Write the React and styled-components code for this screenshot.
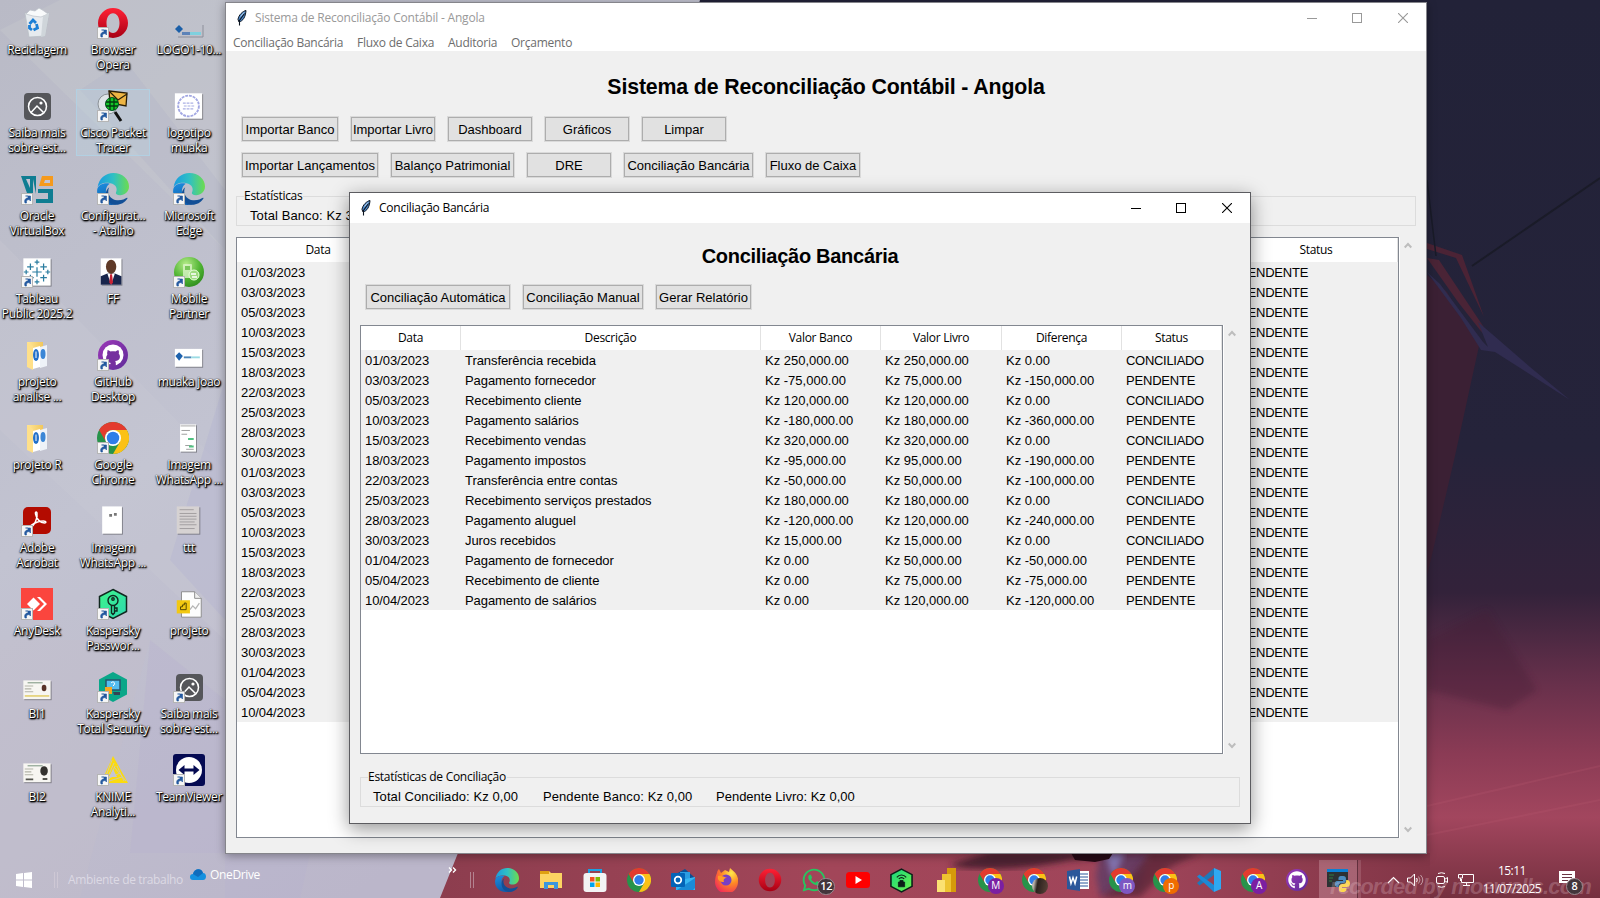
import React from "react";
import styled, { createGlobalStyle, css } from "styled-components";
import { FaGithub, FaWhatsapp } from "react-icons/fa";

const ui = `"Open Sans", "Noto Sans", sans-serif`;
const arial = `"Liberation Sans", Arial, sans-serif`;

const GlobalStyle = createGlobalStyle`
  * { box-sizing: border-box; }
  body { margin: 0; overflow: hidden; font-family: ${ui}; font-size: 12px; }
`;

/* ---------- desktop ---------- */
const Desktop = styled.main`
  position: relative;
  display: flex;
  flex-direction: column;
  width: 1600px;
  height: 898px;
  overflow: hidden;
  background: #24243a;
`;
const WallpaperSvg = styled.svg`
  position: absolute;
  inset: 0;
`;
const IconArea = styled.section`
  position: relative;
  flex: 1;
  display: flex;
  padding-top: 6px;
  margin-left: -1px;
`;
const IconColumn = styled.div`
  display: flex;
  flex-direction: column;
  width: 76px;
`;
const Shortcut = styled.div`
  height: 83px;
  display: flex;
  flex-direction: column;
  align-items: center;
  ${(p) => p.$selected && css`
    height: 67px;
    margin: 0 1px 16px;
    background: rgba(190, 220, 235, 0.28);
    box-shadow: inset 0 0 0 1px rgba(175, 210, 230, 0.8);
  `}
`;
const IconBox = styled.div`
  position: relative;
  width: 32px;
  height: 34px;
  display: flex;
  align-items: center;
  justify-content: center;
`;
const ShortcutArrow = styled.svg`
  position: absolute;
  left: 0;
  bottom: 1px;
`;
const Label = styled.div`
  margin-top: 2px;
  color: #fff;
  line-height: 15px;
  letter-spacing: ${(p) => p.$ls ?? -0.3}px;
  text-align: center;
  white-space: pre;
  text-shadow: 1px 1px 1px #000, 0 1px 2px #000, 1px 1px 2px #000, 0 0 1px rgba(0, 0, 0, 0.9);
`;

/* ---------- windows ---------- */
const Window = styled.section`
  position: absolute;
  left: ${(p) => p.$x}px;
  top: ${(p) => p.$y}px;
  width: ${(p) => p.$w}px;
  height: ${(p) => p.$h}px;
  display: flex;
  flex-direction: column;
  border: 1px solid ${(p) => (p.$active ? "#5c5c60" : "#85858b")};
  background: #f0f0f0;
  box-shadow: ${(p) => (p.$active ? "0 5px 18px rgba(0,0,0,.42)" : "0 2px 9px rgba(0,0,0,.35)")};
`;
const TitleBar = styled.header`
  display: flex;
  align-items: center;
  height: ${(p) => p.$h}px;
  padding-left: 10px;
  background: #fff;
  color: ${(p) => (p.$active ? "#000" : "#999")};
`;
const TitleText = styled.span`
  flex: 1;
  margin-left: 7px;
  line-height: 16px;
  letter-spacing: ${(p) => p.$ls}px;
  white-space: nowrap;
`;
const WinButton = styled.span`
  width: ${(p) => p.$w}px;
  padding-right: ${(p) => (p.$w === 45 ? 1 : 0)}px;
  display: flex;
  justify-content: center;
`;
const MenuBar = styled.nav`
  display: flex;
  gap: 14px;
  height: 19px;
  padding-left: 7px;
  background: #fff;
  color: #6d6d6d;
  line-height: 21px;
`;
const MenuItem = styled.span`
  width: ${(p) => p.$w}px;
  letter-spacing: -0.25px;
  white-space: nowrap;
`;
const Body = styled.div`
  flex: 1;
  display: flex;
  flex-direction: column;
  padding: 20px 10px 0;
  font-family: ${arial};
  font-size: 13px;
  color: #000;
`;
const Heading = styled.h1`
  margin: 0;
  height: ${(p) => p.$h}px;
  line-height: ${(p) => p.$lh}px;
  font-size: ${(p) => p.$size}px;
  font-weight: 700;
  text-align: center;
  letter-spacing: ${(p) => p.$ls}px;
`;
const ButtonRow = styled.div`
  display: flex;
  gap: 11px;
  padding-left: 5px;
  margin-top: ${(p) => p.$mt}px;
`;
const Button = styled.button`
  width: ${(p) => p.$w}px;
  height: 26px;
  padding: 1px 0 0;
  border: 1px solid #dadada;
  background: #e1e1e1;
  box-shadow: inset 0 0 0 1px #adadad;
  font: 13px/23px ${arial};
  letter-spacing: ${(p) => p.$ls ?? 0}px;
  white-space: nowrap;
  color: #000;
`;
const Frame = styled.div`
  position: relative;
  display: flex;
  height: 30px;
  margin-top: ${(p) => p.$mt}px;
  padding: 11px 0 0 ${(p) => p.$pl}px;
  border: 1px solid #dcdcdc;
  line-height: 16px;
  white-space: nowrap;
`;
const Legend = styled.span`
  position: absolute;
  left: 7px;
  top: -10px;
  padding-right: 1px;
  background: #f0f0f0;
  font: 12px/17px ${ui};
  letter-spacing: -0.28px;
`;
const Stat = styled.span`
  width: ${(p) => p.$w}px;
  letter-spacing: ${(p) => p.$ls ?? 0}px;
`;
const TreeArea = styled.div`
  display: flex;
  margin-top: ${(p) => p.$mt}px;
  height: ${(p) => p.$h}px;
`;
const Tree = styled.div`
  width: ${(p) => p.$w}px;
  border: 1px solid #828790;
  background: #fff;
  box-shadow: 1px 0 #fff;
`;
const TreeHead = styled.div`
  display: grid;
  grid-template-columns: ${(p) => p.$cols};
  height: 24px;
  font: 12px/23px ${ui};
  text-align: center;
`;
const HeadCell = styled.span`
  letter-spacing: -0.3px;
  border-right: 1px solid ${(p) => (p.$blank ? "#fff" : "#e2e2e2")};
`;
const TreeRow = styled.div`
  display: grid;
  grid-template-columns: ${(p) => p.$cols};
  height: 20px;
  line-height: 22px;
  background: #f0f0f0;
`;
const Cell = styled.span`
  padding-left: 4px;
  white-space: pre;
  letter-spacing: ${(p) => p.$ls ?? 0}px;
`;
const ScrollBar = styled.div`
  width: 17px;
  display: flex;
  flex-direction: column;
  align-items: center;
  justify-content: space-between;
  padding: 5px 0;
`;

/* ---------- taskbar ---------- */
const Taskbar = styled.footer`
  position: relative;
  display: flex;
  align-items: center;
  height: 38px;
  color: #fff;
`;
const StartButton = styled.div`
  width: 48px;
  padding-top: 2px;
  display: flex;
  justify-content: center;
`;
const Grip = styled.div`
  width: 4px;
  height: 16px;
  margin-top: 2px;
  margin-left: ${(p) => p.$ml}px;
  border: solid rgba(225, 215, 225, 0.45);
  border-width: 0 1px;
`;
const BarText = styled.span`
  width: ${(p) => p.$w}px;
  margin-left: ${(p) => p.$ml}px;
  margin-top: ${(p) => p.$mt ?? 0}px;
  color: ${(p) => p.$c ?? "#fff"};
  letter-spacing: -0.35px;
  white-space: nowrap;
`;
const OneDriveIcon = styled.svg`
  margin: -9px 0 0 8px;
`;
const Apps = styled.div`
  display: flex;
  height: 38px;
  margin-left: 11px;
`;
const AppSlot = styled.div`
  position: relative;
  width: 43.9px;
  padding-top: 2px;
  display: flex;
  align-items: center;
  justify-content: center;
  ${(p) => p.$active && css`
    width: 38px;
    background: rgba(255, 225, 232, 0.25);
    box-shadow: 1px 0 #63303e, 4px 0 rgba(255, 225, 232, 0.15);
  `}
`;
const Avatar = styled.span`
  position: absolute;
  left: 20px;
  top: 18px;
  width: 16px;
  height: 16px;
  border-radius: 50%;
  background: ${(p) => p.$c};
  font: 10px/15px ${ui};
  text-align: center;
`;
const CountBadge = styled.span`
  position: absolute;
  left: ${(p) => p.$x}px;
  top: ${(p) => p.$y}px;
  width: ${(p) => p.$w}px;
  height: 17px;
  border: 1px solid #9b8a90;
  border-radius: 9px;
  background: #43353b;
  font: 600 11px/14px ${ui};
  letter-spacing: -0.3px;
  text-align: center;
`;
const Tray = styled.div`
  display: flex;
  align-items: center;
  padding-top: 2px;
  margin-left: 29px;
`;
const TraySvg = styled.svg`
  margin-left: ${(p) => p.$ml ?? 0}px;
  margin-top: ${(p) => p.$mt ?? 0}px;
`;
const Clock = styled.div`
  width: 60px;
  margin-left: 8px;
  text-align: center;
  line-height: 18px;
  letter-spacing: -0.55px;
  white-space: nowrap;
`;
const Notifications = styled.div`
  position: relative;
  width: 24px;
  height: 20px;
  margin-left: 17px;
`;
const Watermark = styled.span`
  position: absolute;
  left: 1330px;
  top: 14px;
  font: italic 700 22px/26px ${arial};
  letter-spacing: -0.9px;
  color: rgba(235, 200, 210, 0.27);
  white-space: nowrap;
`;

/* ---------- icon drawings ---------- */
const Svg = ({ s = 32, v = 32, children }) => (
  <svg width={s} height={s} viewBox={`0 0 ${v} ${v}`}>{children}</svg>
);
const Gradients = () => (
  <defs>
    <linearGradient id="edgeTop" x1="0" y1="0.5" x2="1" y2="0.5">
      <stop offset="0" stopColor="#1a9be0" /><stop offset=".5" stopColor="#2fc0c4" /><stop offset="1" stopColor="#6ddc4e" />
    </linearGradient>
    <linearGradient id="edgeSide" x1="0" y1="0" x2="0.3" y2="1">
      <stop offset="0" stopColor="#1c8fe0" /><stop offset="1" stopColor="#0f5cab" />
    </linearGradient>
    <linearGradient id="opera" x1="0" y1="0" x2="0" y2="1">
      <stop offset="0" stopColor="#ff2135" /><stop offset="1" stopColor="#a70014" />
    </linearGradient>
    <linearGradient id="purple" x1="0" y1="0" x2="1" y2="1">
      <stop offset="0" stopColor="#9c38b8" /><stop offset="1" stopColor="#5f2c99" />
    </linearGradient>
    <linearGradient id="kasp" x1="0" y1="0" x2="1" y2="1">
      <stop offset="0" stopColor="#3df58a" /><stop offset="1" stopColor="#2ed8b0" />
    </linearGradient>
    <linearGradient id="kaspVpn" x1="0" y1="0" x2="1" y2="1">
      <stop offset="0" stopColor="#17d67e" /><stop offset="1" stopColor="#6df44a" />
    </linearGradient>
    <radialGradient id="fox" cx=".7" cy=".2" r=".9">
      <stop offset="0" stopColor="#ffe84a" /><stop offset=".45" stopColor="#ff8a24" /><stop offset="1" stopColor="#f0245c" />
    </radialGradient>
    <radialGradient id="mobile" cx=".4" cy=".25" r=".8">
      <stop offset="0" stopColor="#b6ec8a" /><stop offset=".6" stopColor="#4fb432" /><stop offset="1" stopColor="#2c8a1c" />
    </radialGradient>
    <linearGradient id="folder" x1="0" y1="0" x2="1" y2="0">
      <stop offset="0" stopColor="#ffe69a" /><stop offset="1" stopColor="#f1c75b" />
    </linearGradient>
  </defs>
);
const Edge = ({ s }) => (
  <Svg s={s} v={24}>
    <path fill="url(#edgeTop)" d="M.4 10.8C1.4 4 6.5 0 12.3 0 19 0 24 4.6 24 10.2c0 4-3.2 6.4-6.6 6.4-2.6 0-3.6-1-3.2-2C15.6 12 14.6 8.4 10 7.6 5.4 6.8 1.6 8.2.4 10.8Z" />
    <path fill="url(#edgeSide)" d="M.2 12.2C.8 8.6 5.5 7 9.6 8 6.600 9.6 5.8 14 7.6 17.5c1.9 3.6 5.6 5 9.4 4.8C9 26.8-1.2 21.5.2 12.2Z" />
    <path fill="#124f96" d="M9.2 10.6c-2.2 4 .4 9.2 5.800 9.8 3.4.3 6.2-1.2 7.2-1.7.6-.2.8.2.5.7-2.6 4.2-8.4 5.8-12.4 3.3-4.5-2.6-5-9.4-1.1-12.1Z" />
  </Svg>
);
const Chrome = ({ s }) => (
  <Svg s={s} v={24}>
    <circle cx="12" cy="12" r="12" fill="#27934a" />
    <path fill="#fbc116" d="M12 24A12 12 0 0 0 22.4 6H12l5.2 9Z" />
    <path fill="#e33b2e" d="M1.6 6a12 12 0 0 1 20.8 0H12a6 6 0 0 0-5.2 9Z" />
    <circle cx="12" cy="12" r="6" fill="#fff" />
    <circle cx="12" cy="12" r="4.7" fill="#2f7de9" />
  </Svg>
);
const Opera = ({ s }) => (
  <Svg s={s} v={32}>
    <path fill="url(#opera)" fillRule="evenodd" d="M16 1a15 15 0 1 0 0 30 15 15 0 0 0 0-30Zm0 5.200c4 0 6.500 4.300 6.500 9.800S20 26 16 26s-6.500-4.500-6.500-10S12 6.200 16 6.200Z" />
  </Svg>
);
const GitHubDesktop = ({ s }) => (
  <Svg s={s} v={32}>
    <circle cx="16" cy="16" r="15" fill="url(#purple)" />
    <circle cx="16" cy="16" r="10.500" fill="#fff" />
    <svg x="7" y="8" width="18" height="19" viewBox="0 0 480 512">
      <path fill="#75309f" d="M90 90c25-5 60 15 85 32 42-10 88-10 130 0 25-17 60-37 85-32 14 32 12 66 4 88 26 30 36 62 32 100-8 70-60 96-130 102 16 16 20 40 20 70v100H164v-60c-50 10-70-12-84-40-8-16-16-22-28-32 40-6 58 12 74 36 10 14 24 16 40 10 2-16 8-28 18-36-74-8-126-42-130-120-2-38 10-70 34-98-8-32-8-66 2-88Z" />
    </svg>
  </Svg>
);
const Photo = () => (
  <Svg>
    <rect x="3" y="3" width="27" height="27" rx="4" fill="#55565a" />
    <g fill="none" stroke="#fff" strokeWidth="1.500">
      <circle cx="16.500" cy="16.500" r="9" /><path d="m10 22.500 6-6.500 6.500 6.500" />
    </g>
    <circle cx="20" cy="13" r="1.600" fill="#fff" />
  </Svg>
);
const Paper = ({ w, h, c = "#fff", dx = 0, dy = 0, children }) => (
  <svg width="34" height="34" viewBox="0 0 34 34">
    <g transform={`translate(${dx} ${dy})`}>
      <rect x={18 - w / 2} y={18 - h / 2} width={w} height={h} fill="#000" opacity=".35" />
      <rect x={17 - w / 2} y={17 - h / 2} width={w} height={h} fill={c} />
      {children}
    </g>
  </svg>
);
const Bin = () => (
  <Svg>
    <path d="M4 6 28 6 24 29 8 30Z" fill="#e6eaee" stroke="#b8bec4" strokeWidth=".7" />
    <path d="m5 7 4-4 5 1 4-3 5 3 4 3-7 3-8-1Z" fill="#f8fafb" stroke="#bcc2c8" strokeWidth=".7" />
    <path d="m22 9 6-3-4 23-4 1Z" fill="#cfd5da" />
    <g fill="none" stroke="#1b7fd6" strokeWidth="2.800"><path d="m8.500 17 3.500-4 3 3M15.500 17l1 4-4 2M11 23l-2.500-2v-3" /></g>
  </Svg>
);
const Packet = () => (
  <Svg>
    <circle cx="11" cy="14" r="10" fill="#dfe4e8" stroke="#8c9297" />
    <path d="m12 1 18 2-1 13-16-3Z" fill="#eeb544" stroke="#2a1d05" strokeWidth="1.300" />
    <path d="m12 1 9 9 9-6" fill="none" stroke="#2a1d05" strokeWidth="1.200" />
    <circle cx="15" cy="14" r="6.500" fill="#12c628" stroke="#052" />
    <path d="M9 12h12M9 16h12M13 8v12M17 8v12" stroke="#053a10" strokeWidth="1.300" />
    <path d="m18 22 6 9" stroke="#111" strokeWidth="3" />
  </Svg>
);
const VirtualBox = () => (
  <Svg>
    <path d="M0 3h12v3l3 15V3h-3v20H7Z" fill="#0f7d92" /><path d="M5 6h4v9Z" fill="#c4c5d3" />
    <path d="M21 3h11v10H18Z" fill="#f59a1c" /><path d="M24 7h5v3h-6Z" fill="#c4c5d3" />
    <path d="M17 16h15v14H15v-4h12v-6H17Z" fill="#0f7d92" />
  </Svg>
);
const Tableau = () => (
  <Paper w={29} h={29}>
    <g stroke="#2b7da0" strokeWidth="1.300">
      <path d="M17 12v10M12 17h10" /><path d="M10 8v7M6.500 11.500h7M24 8v7M20.500 11.500h7M10 20v7M6.500 23h7M24 20v7M20.500 23h7" />
      <path d="M17 4v5M14.500 6.500h5M17 25v5M14.500 27.500h5M5.500 14.500v5M3 17h5M28.500 14.500v5M26 17h5" />
    </g>
  </Paper>
);
const Portrait = () => (
  <Paper w={22} h={28} dx={-2} dy={-0.5}>
    <path d="M6 31v-9l7-3h8l7 3v9Z" fill="#18254c" /><path d="m13 19 4 12 4-12Z" fill="#fff" /><path d="m16 20-1 9 2 2 2-2-1-9Z" fill="#c92335" />
    <ellipse cx="17" cy="12" rx="5.500" ry="7.500" fill="#5f3a28" />
  </Paper>
);
const MobilePartner = () => (
  <Svg>
    <circle cx="16" cy="16" r="15" fill="url(#mobile)" />
    <rect x="10" y="8" width="9" height="14" rx="1" fill="#dff5cd" opacity=".75" /><rect x="12" y="10" width="5" height="4" fill="#7ac65a" />
    <circle cx="21" cy="19" r="5" fill="#9edb80" stroke="#eaffdc" /><path d="M18 18h5M19 21h5" stroke="#fff" strokeWidth="1.300" />
  </Svg>
);
const Folder = () => (
  <Svg>
    <path d="M6 3h16v4l-7 22-9-3Z" fill="url(#folder)" /><path d="m6 3 6 4v24l-6-3Z" fill="#ffe08a" />
    <path d="m12 9 7-2v21l-7 2Z" fill="#fff" /><path d="m19 8 7-2v21l-7 2Z" fill="#eef2f8" />
    <ellipse cx="15" cy="16" rx="3" ry="6" fill="#2270c9" /><ellipse cx="22" cy="15" rx="2.500" ry="5" fill="#3b86d6" />
    <path d="M15 12.500v6.500" stroke="#fff" />
  </Svg>
);
const Acrobat = () => (
  <Svg>
    <rect x="2" y="2" width="28" height="27" rx="5" fill="#b30b00" />
    <path d="M10 22c3-1 7-9 6-14-.6-2-2-1-1.500 1 .8 5 5 9 9 9 2 0 2-2-1-2-4 0-9 2-12 4-1 1-1.500 2-.5 2Z" fill="none" stroke="#fff" strokeWidth="1.500" />
  </Svg>
);
const AnyDesk = () => (
  <Svg><rect width="32" height="32" fill="#fb453e" /><path d="m6 16 6.500-6.500L19 16l-6.500 6.500Z" fill="#fff" /><path d="m16 9 7 7-7 7 3 0 7-7-7-7Z" fill="#fff" /></Svg>
);
const hexPath = "M16 1.500 29.500 8.500v15L16 30.500 2.500 23.500v-15Z";
const KeyHex = () => (
  <Svg>
    <path d={hexPath} fill="url(#kasp)" stroke="#10281f" strokeWidth="1.500" />
    <g fill="none" stroke="#10281f" strokeWidth="1.400"><circle cx="16" cy="12.500" r="5" /><circle cx="16" cy="11" r="1.200" /><path d="M14.500 17v8l1.500 1.500 1.500-1.500V17M18 20h2v3h-2" /></g>
  </Svg>
);
const TotalSecurity = () => (
  <Svg>
    <path d="M16 1 30 8.500v15L16 31 2 23.500v-15Z" fill="#0aa789" />
    <rect x="9" y="9" width="14" height="10" fill="#55bdf0" stroke="#27566d" strokeWidth="1.500" />
    <path d="M14 12c3-3 5 1 2 3" fill="none" stroke="#fff" /><rect x="8" y="16" width="7" height="7" fill="#f5a623" /><path d="M16 21h7v3h-6Z" fill="#345" />
  </Svg>
);
const Knime = () => (
  <Svg>
    <path d="M16 2 31 29H4Z" fill="#fbdb0e" />
    <path d="m15 6-8 21M17 9 10 25M18 12l-6 13M6 27l17-8M9 28l16-5M20 12l7 15M17 13l12 14" stroke="#c6c4cc" strokeWidth=".8" />
    <path d="m16 15-4 8h8Z" fill="#c4c4d4" />
  </Svg>
);
const TeamViewer = () => (
  <Svg><rect width="32" height="32" rx="3" fill="#050a52" /><circle cx="16" cy="16" r="13" fill="#fff" />
    <path d="m5.500 16 6-5v3.500h9V11l6 5-6 5v-3.500h-9V21Z" fill="#050a52" /></Svg>
);
const PowerBiFile = () => (
  <svg width="34" height="34" viewBox="0 0 34 34">
    <path d="M9 4h14l7 7v20H9Z" fill="#fdfdfd" stroke="#8a8a8a" /><path d="M23 4v7h7" fill="#eee" stroke="#8a8a8a" />
    <path d="m18 23 3-4 3 3 4-6" fill="none" stroke="#b5b5b5" strokeWidth="1.300" />
    <rect x="4" y="13" width="14" height="14" fill="#f2c811" /><path d="M8 23v-3h2v-2h2v-2h2v7Z" fill="none" stroke="#3b3200" strokeWidth=".9" />
  </svg>
);
const IdCard = ({ dark }) => (
  <Paper w={29} h={20} c="#f7f6f2" dy={3}>
    <path d="M7 9.500h16" stroke="#8fa593" strokeWidth="1.300" /><path d="M4 13h9M4 16h7M4 19h9" stroke="#b3b3a8" strokeWidth="1.200" />
    <ellipse cx="24.500" cy="15" rx={dark ? 4 : 2.500} ry={dark ? 5 : 3.500} fill={dark ? "#33322f" : "#583328"} />
    <path d={dark ? "M5 24h8M23 23.500h5" : "M4 23.500h26"} stroke={dark ? "#55554f" : "#e6d584"} strokeWidth="2" />
  </Paper>
);
const Word = () => (
  <Svg s={24} v={24}>
    <rect x="12" y="3" width="11" height="18" fill="#fff" /><path d="M14 6h8M14 9h8M14 12h8M14 15h8M14 18h8" stroke="#2b579a" />
    <path d="M1 3 14 1v22L1 21Z" fill="#2b579a" /><path d="m3.500 8.500 1.500 7 2-6 2 6 1.700-7" fill="none" stroke="#fff" strokeWidth="1.500" />
  </Svg>
);
const VsCode = () => (
  <Svg s={24} v={24}>
    <path d="M0 15 17 0v7L2.500 17.500Z" fill="#1f78b8" /><path d="M0 8.500 2.500 6.500 17 17v7Z" fill="#1c8ad6" />
    <path d="M17 0 24 3v18l-7 3Z" fill="#2ea8f2" />
  </Svg>
);
const PythonConsole = () => (
  <Svg s={24} v={24}>
    <rect x="1" y="1" width="21" height="18" fill="#2c3133" /><rect x="1" y="1" width="21" height="3" fill="#0b7fd3" /><path d="M3 7h5M3 10h4M3 13h3" stroke="#2f7d43" />
    <path d="M16 8c-4 0-3.500 2-3.500 4H17v1h-6c-3 0-3 6 0 6h1.500c0-3 1-4 3.500-4 3 0 4-1 4-3 0-3 0-4-4-4Z" fill="#4b8bbe" />
    <path d="M16.500 24c4 0 4-2 4-4H16v-1h5c4 0 4-7 0-7h-.8c0 3-.7 4-3.200 4-3 0-4 1-4 4 0 3 0 4 3.500 4Z" fill="#ffd94a" />
  </Svg>
);
const Feather = () => (
  <svg width="12" height="16" viewBox="0 0 12 16">
    <path d="M10 .500C7 1 2.500 5 2 9.500l1 2.500c4-1 6.500-5 7-11.500Z" fill="#4d86c6" stroke="#0c1420" />
    <path d="m8.500 3.500-5 7v5" fill="none" stroke="#0c1420" strokeWidth="1.100" /><path d="M8 2.500 4.500 6.500" stroke="#b9d6ef" />
  </svg>
);
const Controls = ({ c }) => (
  <>
    <WinButton $w={46}><svg width="10" height="10"><path d="M0 5.500h10" stroke={c} /></svg></WinButton>
    <WinButton $w={45}><svg width="10" height="10"><rect x=".5" y=".5" width="9" height="9" fill="none" stroke={c} /></svg></WinButton>
    <WinButton $w={46}><svg width="10" height="10"><path d="m0 0 10 10M10 0 0 10" stroke={c} strokeWidth="1.100" /></svg></WinButton>
  </>
);
const ScrollArrows = () => (
  <ScrollBar>
    <svg width="8" height="7"><path d="m.7 5.500 3.300-3.500 3.300 3.500" fill="none" stroke="#bdbdbd" strokeWidth="2" /></svg>
    <svg width="8" height="7"><path d="m.7 1.500 3.300 3.500 3.300-3.500" fill="none" stroke="#bdbdbd" strokeWidth="2" /></svg>
  </ScrollBar>
);

/* ---------- data ---------- */
const desktopIcons = [
  [
    ["Reciclagem", <Bin />, 0], ["Saiba mais\nsobre est...", <Photo />, 0], ["Oracle\nVirtualBox", <VirtualBox />, 1],
    ["Tableau\nPublic 2025.2", <Tableau />, 1], ["projeto\nanalise ...", <Folder />, 0], ["projeto R", <Folder />, 0],
    ["Adobe\nAcrobat", <Acrobat />, 1], ["AnyDesk", <AnyDesk />, 1], ["BI1", <IdCard />, 0], ["BI2", <IdCard dark />, 0],
  ],
  [
    ["Browser\nOpera", <Opera s={32} />, 1], ["Cisco Packet\nTracer", <Packet />, 1, true], ["Configurat...\n- Atalho", <Edge s={32} />, 1],
    ["FF", <Portrait />, 0], ["GitHub\nDesktop", <GitHubDesktop s={32} />, 1], ["Google\nChrome", <Chrome s={32} />, 1],
    ["Imagem\nWhatsApp ...", <Paper w={21} h={29} dx={-1} dy={-1}><path d="M14 12h3M19 11h3" stroke="#777" strokeWidth="3" /></Paper>, 0],
    ["Kaspersky\nPasswor...", <KeyHex />, 1], ["Kaspersky\nTotal Security", <TotalSecurity />, 1], ["KNIME\nAnalyti...", <Knime />, 1],
  ],
  [
    ["LOGO1-10...", <svg width="32" height="34"><path d="M30 19v12H5" stroke="#8d8f9a" fill="none" /><path d="m6 19 4 4-4 4-4-4Z" fill="#1b5fa8" /><path d="M9 27.500h8" stroke="#5d83b8" strokeWidth="3" /><path d="M17 27.500h11" stroke="#7fd0de" strokeWidth="3" /></svg>, 0],
    ["logotipo\nmuaka", <Paper w={29} h={27} dx={-0.5}><circle cx="17" cy="17" r="11" fill="none" stroke="#a2a7e2" strokeWidth="2" strokeDasharray="3 1" /><path d="M11 14h12M12 17h11M11 20h12" stroke="#aab0e4" strokeWidth="1.300" strokeDasharray="3 1" /></Paper>, 0],
    ["Microsoft\nEdge", <Edge s={32} />, 1], ["Mobile\nPartner", <MobilePartner />, 1],
    ["muaka joao", <Paper w={29} h={19} dx={-0.5} dy={3}><path d="m7 11 4 4-4 5-4-5Z" fill="#1e62ad" /><path d="M12 16.500h8" stroke="#4d86b8" strokeWidth="2" /><path d="M20 16.500h9" stroke="#9bdbe3" strokeWidth="2" /></Paper>, 0],
    ["Imagem\nWhatsApp ...", <Paper w={17} h={29} dx={-1}><path d="M9 4h16" stroke="#ccc" strokeWidth="2" /><path d="M10 9h9M10 13h6M14 25h7M15 29h8" stroke="#999" /><path d="M17 18h6M18 26h5" stroke="#4fc281" strokeWidth="2" /></Paper>, 0],
    ["ttt", <Paper w={24} h={29} c="#d6d2d2" dx={-1} dy={-1}><path d="M8 6h15M8 10h18M8 13h18M8 16h18M8 19h16M8 22h18M8 26h16" stroke="#a09c9e" /></Paper>, 0],
    ["projeto", <PowerBiFile />, 0], ["Saiba mais\nsobre est...", <Photo />, 1], ["TeamViewer", <TeamViewer />, 1],
  ],
];

const reconciliation = [
  ["01/03/2023", "Transferência recebida", "250,000.00", "250,000.00", "0.00"],
  ["03/03/2023", "Pagamento fornecedor", "-75,000.00", "75,000.00", "-150,000.00"],
  ["05/03/2023", "Recebimento cliente", "120,000.00", "120,000.00", "0.00"],
  ["10/03/2023", "Pagamento salários", "-180,000.00", "180,000.00", "-360,000.00"],
  ["15/03/2023", "Recebimento vendas", "320,000.00", "320,000.00", "0.00"],
  ["18/03/2023", "Pagamento impostos", "-95,000.00", "95,000.00", "-190,000.00"],
  ["22/03/2023", "Transferência entre contas", "-50,000.00", "50,000.00", "-100,000.00"],
  ["25/03/2023", "Recebimento serviços prestados", "180,000.00", "180,000.00", "0.00"],
  ["28/03/2023", "Pagamento aluguel", "-120,000.00", "120,000.00", "-240,000.00"],
  ["30/03/2023", "Juros recebidos", "15,000.00", "15,000.00", "0.00"],
  ["01/04/2023", "Pagamento de fornecedor", "0.00", "50,000.00", "-50,000.00"],
  ["05/04/2023", "Recebimento de cliente", "0.00", "75,000.00", "-75,000.00"],
  ["10/04/2023", "Pagamento de salários", "0.00", "120,000.00", "-120,000.00"],
];
const marchDates = reconciliation.slice(0, 10).map((r) => r[0]);
const ledgerDates = [...marchDates, ...reconciliation.map((r) => r[0])];

const mainCols = "163px 835px 163px";
const dialogCols = "100px 300px 120px 121px 120px 100px";

const Wallpaper = () => (
  <WallpaperSvg width="1600" height="898" viewBox="0 0 1600 898">
    <Gradients />
    <defs>
      <linearGradient id="pale" x1="0" y1="0" x2=".5" y2="1">
        <stop offset="0" stopColor="#b9bac6" /><stop offset=".5" stopColor="#c2c3d1" /><stop offset="1" stopColor="#bbb6ca" />
      </linearGradient>
      <linearGradient id="night" x1="0" y1="0" x2="0" y2="1">
        <stop offset="0" stopColor="#222238" /><stop offset=".5" stopColor="#25233a" /><stop offset=".66" stopColor="#33223a" />
        <stop offset=".76" stopColor="#67304b" /><stop offset=".84" stopColor="#8b3b55" /><stop offset=".91" stopColor="#a2465e" /><stop offset="1" stopColor="#75303f" />
      </linearGradient>
      <linearGradient id="floor" x1="0" y1="0" x2="1" y2="0">
        <stop offset="0" stopColor="#8c3d4e" /><stop offset=".4" stopColor="#a24659" /><stop offset=".7" stopColor="#a0455a" /><stop offset="1" stopColor="#823647" />
      </linearGradient>
      <filter id="soft"><feGaussianBlur stdDeviation="3" /></filter>
      <clipPath id="bar"><rect y="853" width="1600" height="45" /></clipPath>
    </defs>
    <rect width="1600" height="898" fill="url(#night)" />
    <rect x="430" y="853" width="1000" height="45" fill="url(#floor)" />
    <path d="M0 0H700L458 853 440 898H0Z" fill="url(#pale)" />
    <path d="M0 30 225 250V0H60Z" fill="#c8cacf" opacity=".35" />
    <path d="M80 90 225 250V190L125 60Z" fill="#b5b6c9" opacity=".4" />
    <path d="M0 240 225 470V640L0 430Z" fill="#c9cad4" opacity=".3" />
    <path d="M170 560 225 380V620Z" fill="#b3b3d0" opacity=".35" />
    <path d="M0 640H150L80 898H0Z" fill="#c2bfca" opacity=".4" />
    <path d="M150 640 225 700V898H300L310 853H130Z" fill="#b8b3ce" opacity=".35" />
    <path d="m1427 243 35 12 22 62-28-59-29-9Z" fill="#4b2335" />
    <path d="m1427 258 12 2 60 90-19-20-22-28Z" fill="#4a2436" />
    <path d="m1427 275 20 17 32 54-24 110-28 120Z" fill="#3b2034" />
    <path d="m1427 272 13 12 43 58 5 5-10-25 14 12 38 33 40 33-75-48-14-2-20-32Z" fill="#302c50" />
    <path d="m1472 266 128-88" stroke="#1a1b28" strokeWidth="2" />
    <path d="m1427 180 9 76" stroke="#191b28" strokeWidth="1.500" />
    <path d="m1427 640 60-30 50 80-30 20-80-20Z" fill="#441f35" opacity=".35" filter="url(#soft)" />
    <path d="M1427 806 1600 766M1427 835 1600 800" stroke="#bb5c72" opacity=".22" strokeWidth="2" fill="none" />
    <g clipPath="url(#bar)">
      <path d="m950 864 40-12h200l-120 8c-40 10-110 12-120 4Z" fill="#4d2030" filter="url(#soft)" />
      <path d="M1100 853h50l-10 35-40 8-4-20Z" fill="#6a3e64" filter="url(#soft)" />
      <path d="M1105 853h20l-12 26Z" fill="#8a83c4" opacity=".8" filter="url(#soft)" />
      <path d="M1150 853h50l-30 14-30 30-40 1 30-20Z" fill="#5b2638" opacity=".8" filter="url(#soft)" />
      <path d="M1071 853h42l-4 6-14 3-20-2Z" fill="#260915" />
    </g>
  </WallpaperSvg>
);

const MainWindow = () => (
  <Window $x={225} $y={2} $w={1202} $h={852}>
    <TitleBar $h={29}>
      <Feather />
      <TitleText $ls={-0.2}>Sistema de Reconciliação Contábil - Angola</TitleText>
      <Controls c="#999" />
    </TitleBar>
    <MenuBar>
      <MenuItem $w={110}>Conciliação Bancária</MenuItem>
      <MenuItem $w={77}>Fluxo de Caixa</MenuItem>
      <MenuItem $w={49}>Auditoria</MenuItem>
      <MenuItem $w={60}>Orçamento</MenuItem>
    </MenuBar>
    <Body>
      <Heading $h={32} $lh={33} $size={21.33} $ls={-0.15}>Sistema de Reconciliação Contábil - Angola</Heading>
      <ButtonRow $mt={13}>
        <Button $w={98}>Importar Banco</Button>
        <Button $w={86}>Importar Livro</Button>
        <Button $w={86}>Dashboard</Button>
        <Button $w={86}>Gráficos</Button>
        <Button $w={86}>Limpar</Button>
      </ButtonRow>
      <ButtonRow $mt={10}>
        <Button $w={138}>Importar Lançamentos</Button>
        <Button $w={125}>Balanço Patrimonial</Button>
        <Button $w={86}>DRE</Button>
        <Button $w={131}>Conciliação Bancária</Button>
        <Button $w={96}>Fluxo de Caixa</Button>
      </ButtonRow>
      <Frame $mt={18} $pl={13}>
        <Legend>Estatísticas</Legend>
        <Stat $ls={0.1}>Total Banco: Kz 3</Stat>
      </Frame>
      <TreeArea $mt={11} $h={601}>
        <Tree $w={1164}>
          <TreeHead $cols={mainCols}><HeadCell>Data</HeadCell><HeadCell $blank /><HeadCell>Status</HeadCell></TreeHead>
          {ledgerDates.map((d, i) => (
            <TreeRow $cols={mainCols} key={i}><Cell $ls={-0.1}>{d}</Cell><Cell /><Cell $ls={-0.2}>PENDENTE</Cell></TreeRow>
          ))}
        </Tree>
        <ScrollArrows />
      </TreeArea>
    </Body>
  </Window>
);

const Dialog = () => (
  <Window $active $x={349} $y={192} $w={902} $h={632}>
    <TitleBar $active $h={30}>
      <Feather />
      <TitleText $ls={-0.25}>Conciliação Bancária</TitleText>
      <Controls c="#000" />
    </TitleBar>
    <Body>
      <Heading $h={29} $lh={26} $size={20} $ls={-0.28}>Conciliação Bancária</Heading>
      <ButtonRow $mt={12}>
        <Button $w={146}>Conciliação Automática</Button>
        <Button $w={122}>Conciliação Manual</Button>
        <Button $w={97}>Gerar Relatório</Button>
      </ButtonRow>
      <TreeArea $mt={15} $h={429}>
        <Tree $w={863}>
          <TreeHead $cols={dialogCols}>
            {["Data", "Descrição", "Valor Banco", "Valor Livro", "Diferença", "Status"].map((h) => <HeadCell key={h}>{h}</HeadCell>)}
          </TreeHead>
          {reconciliation.map((r) => {
            const settled = r[4] === "0.00";
            return (
              <TreeRow $cols={dialogCols} key={r[0]}>
                <Cell $ls={-0.1}>{r[0]}</Cell>
                <Cell $ls={-0.07}>{r[1]}</Cell>
                {r.slice(2).map((v, i) => <Cell key={i}>{`Kz ${v}`}</Cell>)}
                <Cell $ls={settled ? -0.3 : -0.2}>{settled ? "CONCILIADO" : "PENDENTE"}</Cell>
              </TreeRow>
            );
          })}
        </Tree>
        <ScrollArrows />
      </TreeArea>
      <Frame $mt={23} $pl={12}>
        <Legend>Estatísticas de Conciliação</Legend>
        <Stat $w={170} $ls={0.08}>Total Conciliado: Kz 0,00</Stat>
        <Stat $w={173} $ls={0.08}>Pendente Banco: Kz 0,00</Stat>
        <Stat>Pendente Livro: Kz 0,00</Stat>
      </Frame>
    </Body>
  </Window>
);

const ChromeProfile = ({ c, children }) => (
  <AppSlot><Chrome s={24} /><Avatar $c={c}>{children}</Avatar></AppSlot>
);

const TaskBar = () => (
  <Taskbar>
    <StartButton><svg width="16" height="16"><path d="m0 2 7-1v6.500H0ZM8 .900l8-.9v7.500H8ZM0 8.500h7V15l-7-1ZM8 8.500h8V16l-8-1Z" fill="#fff" /></svg></StartButton>
    <Grip $ml={6} />
    <BarText $ml={10} $w={114} $c="#dcd9e4" $mt={1}>Ambiente de trabalho</BarText>
    <OneDriveIcon width="16" height="11"><path d="M3 11a3 3 0 0 1 0-6c1-5 8-7 10-1 4 0 4 7 0 7Z" fill="#1490df" /><path d="M3 5c1-5 8-7 10-1L8 8Z" fill="#0f6cbd" /></OneDriveIcon>
    <BarText $ml={4} $w={49} $mt={-9}>OneDrive</BarText>
    <TraySvg $ml={189} $mt={-19} width="9" height="6"><path d="m1 .500 2.500 2.500L1 5.500M5 .500 7.500 3 5 5.500" fill="none" stroke="#fff" strokeWidth="1.400" /></TraySvg>
    <Grip $ml={13} />
    <Apps>
      <AppSlot><Edge s={24} /></AppSlot>
      <AppSlot><Svg s={24} v={24}><path d="M1 3h9l2 2h11v15H1Z" fill="#fcd462" /><path d="M1 3h9v3H1Z" fill="#dfa012" /><path d="M5 21v-7h14v7h-4v-4H9v4Z" fill="#3b96dd" /></Svg></AppSlot>
      <AppSlot><Svg s={24} v={24}><path d="M6 6V2h12v4" fill="none" stroke="#1ba1e2" strokeWidth="2" /><rect x=".5" y="5" width="23" height="19" rx="3" fill="#f3f3f4" /><path d="M7 9h4.500v4.500H7Z" fill="#f25022" /><path d="M12.500 9H17v4.500h-4.500Z" fill="#7fba00" /><path d="M7 14.500h4.500V19H7Z" fill="#00a4ef" /><path d="M12.500 14.500H17V19h-4.500Z" fill="#ffb900" /></Svg></AppSlot>
      <AppSlot><Chrome s={24} /></AppSlot>
      <AppSlot><Svg s={24} v={24}><path d="m5 6 9-5 9 8-5 5Z" fill="#0a4f96" /><path d="M9 4h10v9H9Z" fill="#2a9de3" /><path d="M5 13 24 9v13H5Z" fill="#37b6f2" /><path d="m24 10-18 12h16l2-2Z" fill="#1a8bd6" /><rect y="5" width="14" height="14" rx="1" fill="#0364b8" /><circle cx="7" cy="12" r="3.300" fill="none" stroke="#fff" strokeWidth="1.700" /></Svg></AppSlot>
      <AppSlot><Svg s={24} v={24}><path d="M3 5c0-2 1-3 2-4l2 4 4-3 4 2 1-4c5 4 9 8 8 14a11.500 11.500 0 0 1-23 0c0-4 1-7 2-9Z" fill="url(#fox)" /><circle cx="12" cy="12" r="5.500" fill="#7a3fc4" /><path d="M4 8c3-1 6 1 9 2-3 0-4 2-3 4-4 0-7-2-6-6Z" fill="#ff9a28" /></Svg></AppSlot>
      <AppSlot><Opera s={24} /></AppSlot>
      <AppSlot><FaWhatsapp size={26} color="#25c660" /><CountBadge $x={25} $y={18} $w={18}>12</CountBadge></AppSlot>
      <AppSlot><Svg s={24} v={24}><rect y="4" width="24" height="16" rx="3.500" fill="#fe0000" /><path d="m9.500 8 6.500 4-6.500 4Z" fill="#fff" /></Svg></AppSlot>
      <AppSlot><Svg s={25} v={32}><path d={hexPath} fill="url(#kaspVpn)" stroke="#0b1f18" strokeWidth="2" /><path d="M10 12c3-4 9-4 12 0M12.500 14c2-2 5-2 7 0" fill="none" stroke="#0b1f18" strokeWidth="1.500" /><path d="M12 18h8v6h-8ZM14 18v-2h4v2" fill="#0b1f18" stroke="#0b1f18" /></Svg></AppSlot>
      <AppSlot><Svg s={24} v={24}><rect x="13" y="0" width="9" height="24" fill="#d69a0a" /><rect x="8" y="6" width="9" height="18" fill="#edc331" /><rect x="3" y="12" width="8" height="12" fill="#fbe172" /></Svg></AppSlot>
      <ChromeProfile c="#7b1fa2">M</ChromeProfile>
      <ChromeProfile c="linear-gradient(100deg,#b9b2ab 15%,#2b211d 35%,#5c443a)" />
      <AppSlot><Word /></AppSlot>
      <ChromeProfile c="#7e57c2">m</ChromeProfile>
      <ChromeProfile c="#ef6c00">p</ChromeProfile>
      <AppSlot><VsCode /></AppSlot>
      <ChromeProfile c="#7b1fa2">A</ChromeProfile>
      <AppSlot><Svg s={24} v={24}><circle cx="12" cy="12" r="11" fill="url(#purple)" /><FaGithub x="3" y="3" size={18} color="#fff" /></Svg></AppSlot>
      <AppSlot $active><PythonConsole /></AppSlot>
    </Apps>
    <Watermark>recorded by moewalls.com</Watermark>
    <Tray>
      <TraySvg $ml={1} width="13" height="8"><path d="m1 7 5.500-5.500L12 7" fill="none" stroke="#fff" strokeWidth="1.200" /></TraySvg>
      <TraySvg $ml={7} width="17" height="14" fill="none" stroke="#fff"><path d="M.5 5h3l4-4v12l-4-4h-3Z" /><path d="M9.500 5q1.500 2 0 4" /><path d="M11.500 3.500q3 3.500 0 7M13.500 2q4.500 5 0 10" opacity=".5" /></TraySvg>
      <TraySvg $ml={12} width="12" height="16" fill="none" stroke="#fff"><rect x=".5" y="4.500" width="8" height="7" rx="1.500" /><path d="m8.500 7.500 3-2v5l-3-2M2 1.500q3.500-1.500 7 0M2 14.500q3.500 1.500 7 0" /></TraySvg>
      <TraySvg $ml={10} width="16" height="14" fill="none" stroke="#fff"><path d="M5 1.500h10.500v8H3.500V6M8.500 9.500v3M5 12.500h7" /><path d="M.5 1.500h4V5h-4ZM2.500 5v3" /></TraySvg>
      <Clock>15:11<br />11/07/2025</Clock>
      <Notifications>
        <svg width="17" height="17"><path d="M0 1h16v12h-3v3l-3-3H0Z" fill="#fff" /><path d="M3 4.500h10M3 7.500h10M3 10.500h6" stroke="#6a3542" /></svg>
        <CountBadge $x={7} $y={8} $w={17}>8</CountBadge>
      </Notifications>
    </Tray>
  </Taskbar>
);

export default function App() {
  return (
    <Desktop>
      <GlobalStyle />
      <Wallpaper />
      <IconArea>
        {desktopIcons.map((col, c) => (
          <IconColumn key={c}>
            {col.map(([label, icon, linked, selected], i) => (
              <Shortcut key={i} $selected={selected}>
                <IconBox>
                  {icon}
                  {linked ? (
                    <ShortcutArrow width="12" height="12"><rect x=".5" y=".5" width="11" height="11" fill="#f6f6f6" stroke="#b5b5b5" /><path d="M4 10c-1-3 .5-5 3-5V3H4.500 9.500v5L8 6.500C6 6.500 5 8 5.500 10Z" fill="#24599f" stroke="#24599f" strokeWidth=".6" /></ShortcutArrow>
                  ) : null}
                </IconBox>
                <Label>{label}</Label>
              </Shortcut>
            ))}
          </IconColumn>
        ))}
      </IconArea>
      <TaskBar />
      <MainWindow />
      <Dialog />
    </Desktop>
  );
}
